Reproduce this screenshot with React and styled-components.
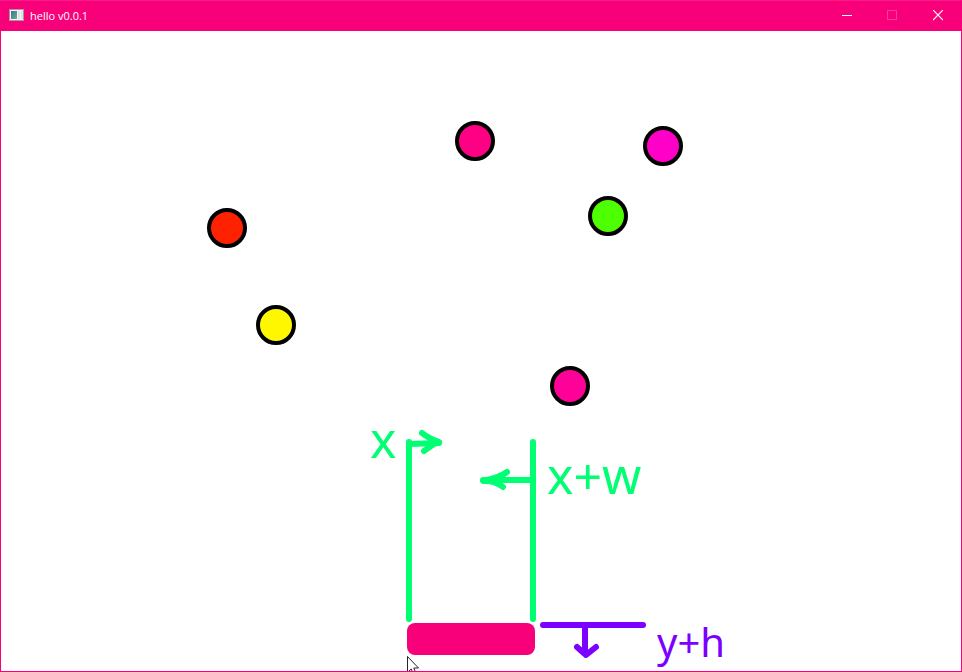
import React from "react";
import styled, { createGlobalStyle } from "styled-components";

const PINK = "#f9007b";
const GREEN = "#00ff73";
const VIOLET = "#7b00ff";

const GlobalStyle = createGlobalStyle`
  * { box-sizing: border-box; }
  body { margin: 0; background: #fff; }
`;

const Window = styled.main`
  display: flex;
  flex-direction: column;
  min-height: 100vh;
  border: 1px solid ${PINK};
  border-top-color: #fa1a88;
  background: #fff;
  font-family: "Open Sans", "Noto Sans", sans-serif;
`;

const TitleBar = styled.header`
  display: flex;
  align-items: center;
  height: 30px;
  flex: none;
  padding-left: 8px;
  background: ${PINK};
  color: #fff;
`;

const Title = styled.h1`
  flex: 1;
  margin: 0 0 0 6px;
  font-size: 11px;
  font-weight: 400;
  line-height: 16px;
`;

const CaptionButton = styled.button`
  display: flex;
  align-items: center;
  justify-content: center;
  width: 46px;
  height: 30px;
  padding: 0;
  border: 0;
  background: transparent;
  color: ${(p) => (p.disabled ? "#fb3d98" : "#fff")};
`;

const Stage = styled.section`
  position: relative;
  flex: 1;
  min-height: 640px;
  overflow: hidden;
`;

const Drawing = styled.svg`
  position: absolute;
  inset: 0;
  width: 100%;
  height: 100%;
`;

const Ball = styled.div`
  position: absolute;
  left: ${(p) => p.$x}px;
  top: ${(p) => p.$y}px;
  width: 40px;
  height: 40px;
  border: 4px solid #000;
  border-radius: 50%;
  background: ${(p) => p.$color};
`;

const Paddle = styled.div`
  position: absolute;
  left: 406px;
  top: 592px;
  width: 128px;
  height: 32px;
  border-radius: 8px;
  background: ${PINK};
`;

const Label = styled.span`
  position: absolute;
  left: ${(p) => p.$x}px;
  top: ${(p) => p.$y}px;
  color: ${(p) => p.$color};
  font-family: "Noto Sans", sans-serif;
  font-size: ${(p) => p.$size}px;
  line-height: 60px;
  white-space: nowrap;
`;

const Pointer = styled.svg`
  position: absolute;
  left: 406px;
  top: 625px;
  width: 12px;
  height: 19px;
`;

const balls = [
  { x: 454, y: 90, color: "#ff0084" },
  { x: 642, y: 95, color: "#ff00c8" },
  { x: 587, y: 165, color: "#4dff00" },
  { x: 206, y: 177, color: "#ff2200" },
  { x: 255, y: 274, color: "#fff700" },
  { x: 549, y: 335, color: "#ff0099" },
];

const labels = [
  { text: "x", x: 369, y: 378, size: 50, color: GREEN },
  { text: "x+w", x: 546, y: 414, size: 50, color: GREEN },
  { text: "y+h", x: 656, y: 581, size: 40, color: VIOLET },
];

function AppIcon() {
  return (
    <svg width="15" height="14" viewBox="0 0 15 14" aria-hidden="true">
      <defs>
        <linearGradient id="pane" x1="0" y1="0" x2="1" y2="1">
          <stop offset="0" stopColor="#3f7196" />
          <stop offset="1" stopColor="#67b08a" />
        </linearGradient>
      </defs>
      <rect width="15" height="12" fill="#a09ca0" />
      <rect x="1" y="1" width="13" height="10" fill="#f2f4f5" />
      <rect x="2" y="2" width="6" height="8" fill="url(#pane)" />
      <rect x="9" y="2" width="2" height="8" fill="#dde1e4" />
      <rect x="12" y="2" width="2" height="8" fill="#dde1e4" />
    </svg>
  );
}

export default function App() {
  return (
    <>
      <GlobalStyle />
      <Window>
        <TitleBar>
          <AppIcon />
          <Title>hello v0.0.1</Title>
          <CaptionButton aria-label="Minimize">
            <svg width="12" height="10" stroke="currentColor"><path d="M2 4.5H12" /></svg>
          </CaptionButton>
          <CaptionButton aria-label="Maximize" disabled>
            <svg width="10" height="12" fill="none" stroke="currentColor"><path d="M.5.5h9v9h-9z" /></svg>
          </CaptionButton>
          <CaptionButton aria-label="Close">
            <svg width="10" height="12" stroke="currentColor" strokeWidth="1.2"><path d="M0 0 10 10M10 0 0 10" /></svg>
          </CaptionButton>
        </TitleBar>
        <Stage>
          {balls.map((b) => (
            <Ball key={`${b.x}-${b.y}`} $x={b.x} $y={b.y} $color={b.color} />
          ))}
          <Paddle />
          <Drawing fill="none" strokeWidth="6" strokeLinecap="round" strokeLinejoin="round" aria-hidden="true">
            <g stroke={GREEN}>
              <path d="M408 411V588M409 413L438 412M421 402Q427 407 438 411Q430 414 423 420" />
              <path d="M532 411V588M532 449H482M506 441Q498 447 482 450Q493 449 502 456" />
            </g>
            <path stroke={VIOLET} d="M542 594H642M584 594V623M576 616L585 624L595 616" />
          </Drawing>
          {labels.map((l) => (
            <Label key={l.text} $x={l.x} $y={l.y} $size={l.size} $color={l.color}>
              {l.text}
            </Label>
          ))}
          <Pointer viewBox="0 0 12 19" aria-hidden="true">
            <path d="M.5.5V16.5L4.2 13L6.5 18.5L9 17.4L6.8 12H11.5Z" fill="#fff" stroke="#222233" />
          </Pointer>
        </Stage>
      </Window>
    </>
  );
}
